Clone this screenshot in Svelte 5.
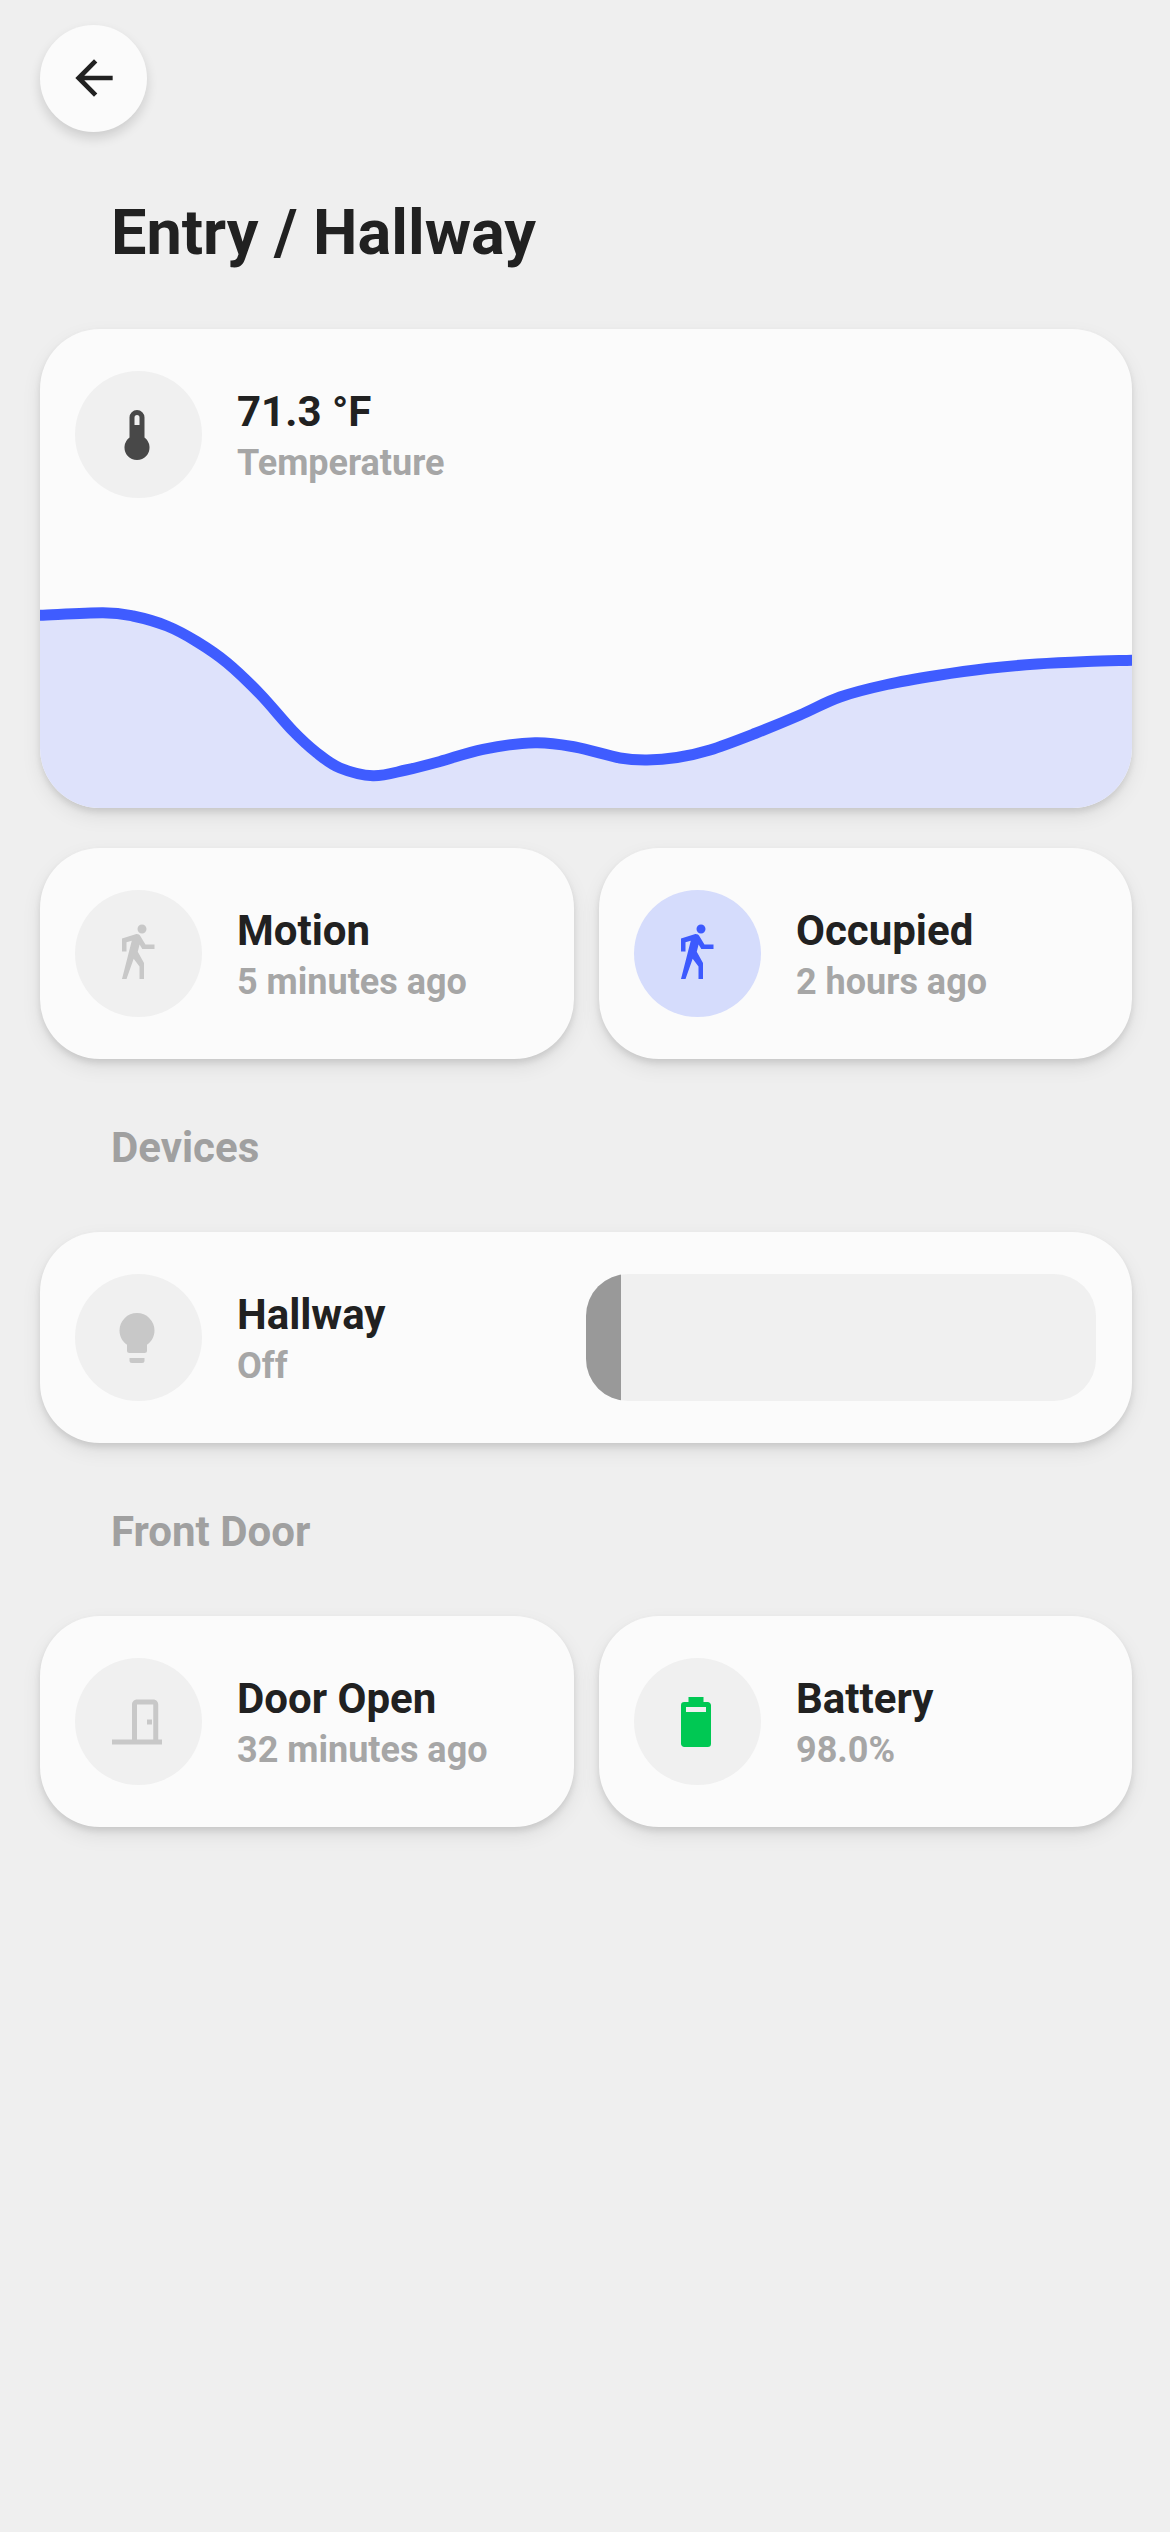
<script>
	const icons = {
		back: 'M20 11H7.83l5.59-5.59L12 4l-8 8 8 8 1.41-1.41L7.83 13H20v-2z',
		thermometer: 'M15 13V5A3 3 0 0 0 9 5V13A5 5 0 1 0 15 13M12 4A1 1 0 0 1 13 5V8H11V5A1 1 0 0 1 12 4Z',
		walk: 'M14.12,10H19V8.2H15.38L13.38,4.87C13.08,4.37 12.54,4.03 11.92,4.03C11.74,4.03 11.58,4.06 11.42,4.11L6,5.8V11H7.8V7.33L9.91,6.67L6,22H7.8L10.67,13.89L13,17V22H14.8V15.59L12.31,11.05L13.04,8.18M14,3.8C15,3.8 15.8,3 15.8,2C15.8,1 15,0.2 14,0.2C13,0.2 12.2,1 12.2,2C12.2,3 13,3.8 14,3.8Z',
		bulb: 'M12,2A7,7 0 0,0 5,9C5,11.38 6.19,13.47 8,14.74V17A1,1 0 0,0 9,18H15A1,1 0 0,0 16,17V14.74C17.81,13.47 19,11.38 19,9A7,7 0 0,0 12,2M9,21A1,1 0 0,0 10,22H14A1,1 0 0,0 15,21V20H9V21Z',
		door: 'M12 3C10.89 3 10 3.89 10 5V19H2V21H22V19H20.5V5C20.5 3.89 19.61 3 18.5 3H12M12 5H18.5V19H12V5M16 11V13H18V11H16Z',
		battery: 'M16.67,4H15V2H9V4H7.33A1.33,1.33 0 0,0 6,5.33V20.67C6,21.4 6.6,22 7.33,22H16.67A1.33,1.33 0 0,0 18,20.67V5.33C18,4.6 17.4,4 16.67,4M16,8H8V6H16V8Z'
	};

	// temperature history, card coordinates (x from card left, y from top of the chart)
	const points = [
		[-30, 118.5], [0, 117.3], [63, 114.7], [93, 118], [127, 128], [157, 143.7], [187, 164.7], [220, 196],
		[253, 233], [277, 255], [300, 270], [333, 277.7], [366, 272], [400, 263.5], [443, 251.3], [495, 244.7],
		[535, 249], [580, 260], [607, 262], [637, 259.5], [670, 252], [715, 235.5], [760, 217], [800, 199],
		[847, 186.5], [897, 177.5], [947, 170.5], [997, 166], [1047, 163.5], [1092, 162.3], [1122, 161.5]
	];

	function smooth(pts) {
		let d = `M${pts[0][0]} ${pts[0][1]}`;
		for (let i = 0; i < pts.length - 1; i++) {
			const p0 = pts[i - 1] ?? pts[i];
			const p1 = pts[i];
			const p2 = pts[i + 1];
			const p3 = pts[i + 2] ?? p2;
			const c1x = p1[0] + (p2[0] - p0[0]) / 6;
			const c1y = p1[1] + (p2[1] - p0[1]) / 6;
			const c2x = p2[0] - (p3[0] - p1[0]) / 6;
			const c2y = p2[1] - (p3[1] - p1[1]) / 6;
			d += `C${c1x} ${c1y} ${c2x} ${c2y} ${p2[0]} ${p2[1]}`;
		}
		return d;
	}

	const line = smooth(points);
	const area = `${line}V310H-30Z`;
</script>

{#snippet icon(path, tone = 'off')}
	<div class="badge {tone}">
		<svg viewBox="0 0 24 24" width="60" height="60"><path d={path} fill-rule="evenodd"></path></svg>
	</div>
{/snippet}

{#snippet info(title, sub)}
	<div class="info">
		<div class="name">{title}</div>
		<div class="sub">{sub}</div>
	</div>
{/snippet}

<main>
	<button class="back" aria-label="Back">
		<svg viewBox="0 0 24 24" width="56" height="56"><path d={icons.back}></path></svg>
	</button>

	<h1>Entry / Hallway</h1>

	<section class="card chart-card">
		<div class="row">
			{@render icon(icons.thermometer, 'dark')}
			{@render info('71.3 °F', 'Temperature')}
		</div>
		<svg class="chart" viewBox="0 0 1092 310" width="1092" height="310">
			<path class="area" d={area}></path>
			<path class="line" d={line}></path>
		</svg>
	</section>

	<div class="pair">
		<div class="card row">
			{@render icon(icons.walk)}
			{@render info('Motion', '5 minutes ago')}
		</div>
		<div class="card row">
			{@render icon(icons.walk, 'active')}
			{@render info('Occupied', '2 hours ago')}
		</div>
	</div>

	<h2>Devices</h2>

	<div class="card row">
		{@render icon(icons.bulb)}
		{@render info('Hallway', 'Off')}
		<div class="slider"><div class="level"></div></div>
	</div>

	<h2>Front Door</h2>

	<div class="pair">
		<div class="card row">
			{@render icon(icons.door)}
			{@render info('Door Open', '32 minutes ago')}
		</div>
		<div class="card row">
			{@render icon(icons.battery, 'green')}
			{@render info('Battery', '98.0%')}
		</div>
	</div>
</main>

<style>
	:global(body) {
		background: #efefef;
		font-family: Roboto, sans-serif;
	}

	main {
		box-sizing: border-box;
		width: 1170px;
		min-height: 2532px;
		padding: 25px 38px 0 40px;
		background: #efefef;
	}

	.back {
		display: flex;
		align-items: center;
		justify-content: center;
		width: 107px;
		height: 107px;
		padding: 0;
		border: none;
		border-radius: 50%;
		background: #fbfbfb;
		box-shadow: 0 6px 12px rgba(0, 0, 0, 0.14);
	}

	.back svg {
		margin-top: -2px;
	}

	.back path {
		fill: #212121;
	}

	h1 {
		box-sizing: border-box;
		margin: 0;
		padding: 65px 0 0 71px;
		height: 197px;
		font-size: 63px;
		line-height: 72px;
		font-weight: 700;
		color: #212121;
	}

	h2 {
		margin: 0;
		height: 173px;
		padding-left: 71px;
		box-sizing: border-box;
		font-size: 42px;
		line-height: 178px;
		font-weight: 700;
		color: #a0a0a0;
	}

	.card {
		border-radius: 60px;
		background: #fbfbfb;
		box-shadow: 0 4px 6px rgba(0, 0, 0, 0.1), 0 8px 20px rgba(0, 0, 0, 0.08);
	}

	.chart-card {
		overflow: hidden;
		margin-bottom: 40px;
	}

	.chart {
		display: block;
	}

	.area {
		fill: #dee2fb;
	}

	.line {
		fill: none;
		stroke: #3f5cff;
		stroke-width: 11;
	}

	.row {
		display: flex;
		align-items: center;
		box-sizing: border-box;
		height: 211px;
		padding: 0 35px;
		gap: 35px;
	}

	.chart-card .row {
		height: 169px;
		padding-top: 42px;
	}

	.pair {
		display: grid;
		grid-template-columns: 534px 533px;
		gap: 25px;
	}

	.badge {
		display: flex;
		align-items: center;
		justify-content: center;
		flex: none;
		width: 127px;
		height: 127px;
		border-radius: 50%;
		background: #f0f0f0;
	}

	.badge svg {
		margin-left: -3px;
	}

	.badge path {
		fill: #c8c8c8;
	}

	.badge.dark path {
		fill: #484848;
	}

	.badge.active {
		background: #d5dcfc;
	}

	.badge.active path {
		fill: #3d5afe;
	}

	.badge.green path {
		fill: #00c853;
	}

	.info {
		flex: 1;
		min-width: 0;
		padding-top: 4px;
	}

	.name {
		font-size: 42px;
		line-height: 52px;
		font-weight: 700;
		color: #212121;
	}

	.sub {
		font-size: 36px;
		line-height: 50px;
		font-weight: 700;
		color: #a6a6a6;
	}

	.slider {
		flex: none;
		overflow: hidden;
		width: 510px;
		height: 127px;
		margin-right: 1px;
		border-radius: 42px;
		background: #f0f0f0;
	}

	.level {
		width: 35px;
		height: 100%;
		background: #999999;
	}
</style>
